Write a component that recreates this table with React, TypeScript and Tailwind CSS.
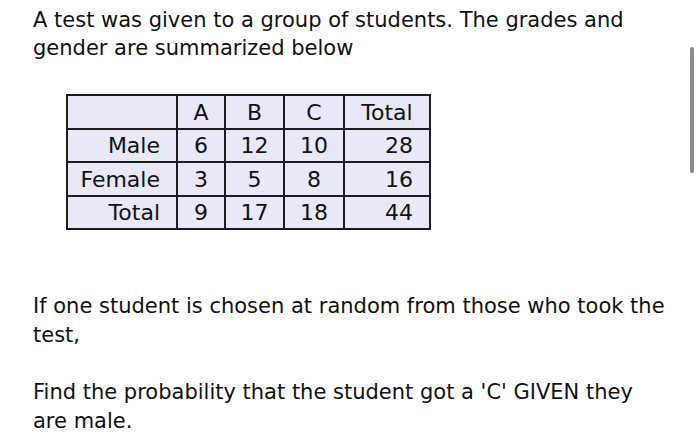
const rows = [
  { label: 'Male', a: 6, b: 12, c: 10, total: 28 },
  { label: 'Female', a: 3, b: 5, c: 8, total: 16 },
  { label: 'Total', a: 9, b: 17, c: 18, total: 44 },
];

const cell = 'border-2 border-[#1c1c1c] h-[33.5px] p-0 pt-[2px]';

export default function App() {
  return (
    <div
      className="relative w-[700px] h-[442px] overflow-hidden bg-white text-[#111] text-[21px]"
      style={{ fontFamily: '"DejaVu Sans", sans-serif' }}
    >
      <div className="pl-[33px] pr-[32px] pt-[6px]">
        <p className="leading-[28px]">
          A test was given to a group of students. The grades and gender are summarized below
        </p>

        <table className="ml-[33px] mt-[32px] border-collapse bg-[#e8e8f7] leading-none text-[22px]">
          <thead>
            <tr>
              <th className={`${cell} w-[110px]`}></th>
              <th className={`${cell} w-[48px] font-normal text-center`}>A</th>
              <th className={`${cell} w-[59px] font-normal text-center`}>B</th>
              <th className={`${cell} w-[60px] font-normal text-center`}>C</th>
              <th className={`${cell} w-[86px] font-normal text-center`}>Total</th>
            </tr>
          </thead>
          <tbody>
            {rows.map((r) => (
              <tr key={r.label}>
                <td className={`${cell} text-right pr-[16px]`}>{r.label}</td>
                <td className={`${cell} text-center`}>{r.a}</td>
                <td className={`${cell} text-center`}>{r.b}</td>
                <td className={`${cell} text-center`}>{r.c}</td>
                <td className={`${cell} text-right pr-[16px]`}>{r.total}</td>
              </tr>
            ))}
          </tbody>
        </table>

        <p className="mt-[62px] leading-[29px]">
          If one student is chosen at random from those who took the test,
        </p>
        <p className="mt-[28px] leading-[29px]">
          Find the probability that the student got a 'C' GIVEN they are male.
        </p>
      </div>

      {/* scrollbar thumb */}
      <div className="absolute left-[690px] top-[47px] w-[4px] h-[126px] rounded-full bg-[#8a8a8a]" />
    </div>
  );
}
